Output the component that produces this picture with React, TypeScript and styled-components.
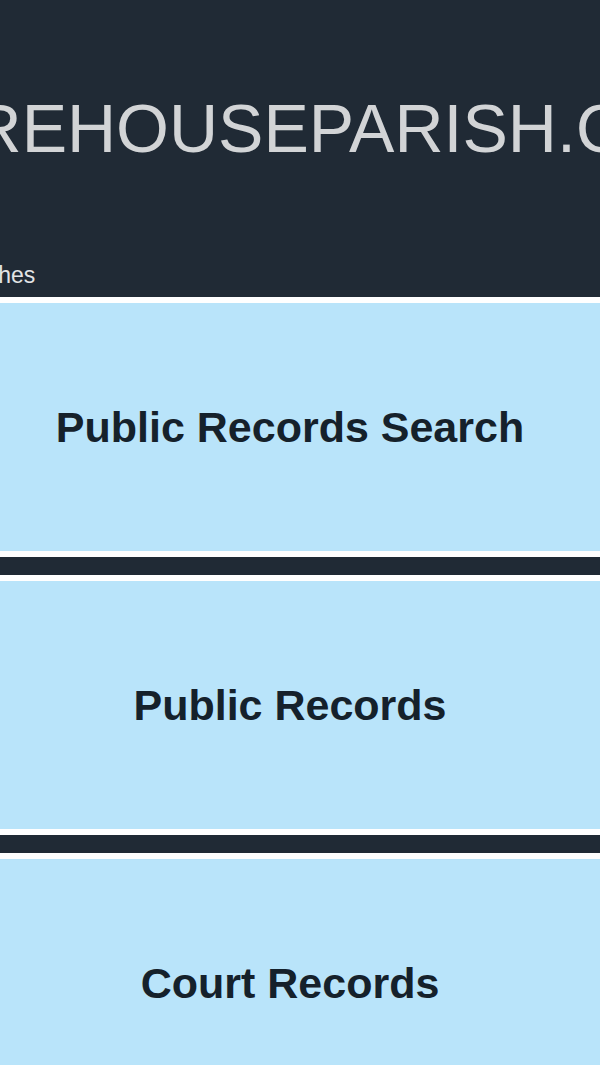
import React, { FC } from 'react';
import styled, { createGlobalStyle } from 'styled-components';

const colors = {
    dark: '#202a35',
    tile: '#b9e4fa',
    tileText: '#15212b',
    title: '#d2d4d6',
    tagline: '#e2e4e6',
    rule: '#ffffff',
};

const GlobalStyle = createGlobalStyle`
    html, body {
        margin: 0;
        padding: 0;
        background: ${colors.dark};
        overflow-x: hidden;
    }
    * {
        box-sizing: border-box;
    }
`;

const links = ['Public Records Search', 'Public Records', 'Court Records'];

const Tile: FC<{ label: string }> = ({ label }) => {
    return (
        <TileBox>
            <TileLabel>{label}</TileLabel>
        </TileBox>
    );
};

export default function App() {
    return (
        <Page>
            <GlobalStyle />
            <Header>
                <Brand>
                    <SiteTitle>WAREHOUSEPARISH.COM</SiteTitle>
                    <Tagline>Record Searches</Tagline>
                </Brand>
            </Header>

            <TileList>
                {links.map((label) => (
                    <Tile key={label} label={label} />
                ))}
            </TileList>
        </Page>
    );
}

const Page = styled.div`
    min-height: 100vh;
    background: ${colors.dark};
    font-family: 'Liberation Sans', Arial, sans-serif;
`;

const Header = styled.header`
    height: 297px;
    display: flex;
    justify-content: center;
    overflow: hidden;
    padding-top: 89px;
`;

const Brand = styled.div`
    flex-shrink: 0;
    display: flex;
    flex-direction: column;
    align-items: flex-start;
`;

const SiteTitle = styled.h1`
    margin: 0;
    font-size: 68px;
    font-weight: 400;
    line-height: 78px;
    white-space: nowrap;
    color: ${colors.title};
`;

const Tagline = styled.p`
    margin: 95px 0 0 -8px;
    font-size: 23px;
    line-height: 27px;
    white-space: nowrap;
    color: ${colors.tagline};
`;

const TileList = styled.div`
    display: flex;
    flex-direction: column;
    gap: 18px;
`;

const TileBox = styled.a`
    display: flex;
    align-items: center;
    justify-content: center;
    height: 260px;
    padding-right: 20px;
    background: ${colors.tile};
    border-top: 6px solid ${colors.rule};
    border-bottom: 6px solid ${colors.rule};
    text-decoration: none;
`;

const TileLabel = styled.span`
    font-size: 43px;
    font-weight: 700;
    color: ${colors.tileText};
    white-space: nowrap;
`;
